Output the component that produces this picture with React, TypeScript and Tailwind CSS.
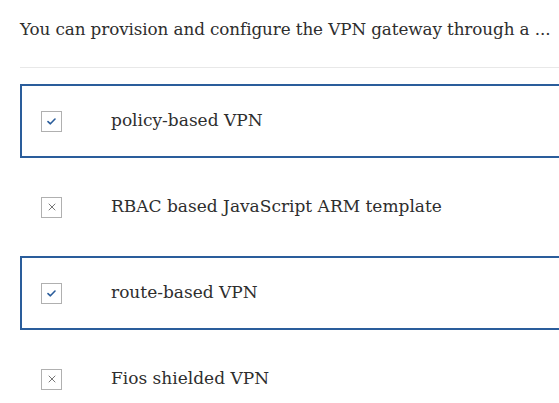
import React from 'react'

type Option = {label: string; correct: boolean}

const options: Option[] = [
  {label: 'policy-based VPN', correct: true},
  {label: 'RBAC based JavaScript ARM template', correct: false},
  {label: 'route-based VPN', correct: true},
  {label: 'Fios shielded VPN', correct: false},
]

const CheckMark = () => (
  <svg width="9" height="7" viewBox="0 0 9 7" fill="none">
    <path d="M1 3.6 L3.4 5.8 L8 1" stroke="#2a5d9b" strokeWidth="1.6" strokeLinecap="round" strokeLinejoin="round" />
  </svg>
)

const Cross = () => (
  <svg width="8" height="8" viewBox="0 0 8 8" fill="none">
    <path d="M1 1 L7 7 M7 1 L1 7" stroke="#777" strokeWidth="1" strokeLinecap="round" />
  </svg>
)

const OptionRow = ({option}: {option: Option}) => (
  <li
    className={`flex items-center h-[74px] pl-[19px] ${
      option.correct ? 'border-2 border-[#2a5d9b]' : 'border-2 border-transparent'
    }`}
  >
    <span className="flex items-center justify-center w-[21px] h-[21px] border border-[#b0b0b0] bg-white shrink-0">
      {option.correct ? <CheckMark /> : <Cross />}
    </span>
    <span className="ml-[49px] text-[17px] text-[#2e2e2e]">{option.label}</span>
  </li>
)

export default function App() {
  return (
    <div className="w-[559px] h-[403px] overflow-hidden bg-white" style={{fontFamily: '"DejaVu Serif", serif'}}>
      <div className="w-[600px] pl-[20px]">
        <p className="pt-[17px] h-[67px] text-[16.8px] text-[#2e2e2e] whitespace-nowrap tracking-[-0.1px]">
          You can provision and configure the VPN gateway through a ...
        </p>
        <div className="h-[1px] bg-[#e8e8e8]" />
        <ul className="flex flex-col gap-[12px] pt-[16px] list-none">
          {options.map(o => (
            <OptionRow key={o.label} option={o} />
          ))}
        </ul>
      </div>
    </div>
  )
}
